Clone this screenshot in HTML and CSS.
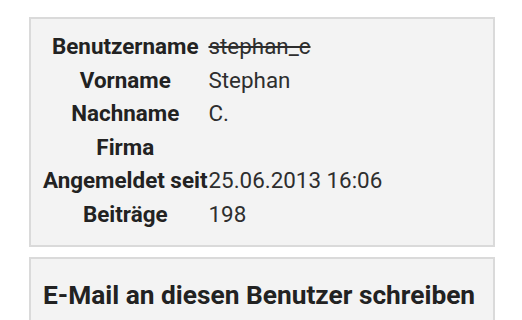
FILE: index.html
```html
<!DOCTYPE html>
<html lang="de">
<head>
<meta charset="utf-8">
<link rel="stylesheet" href="styles.css">
</head>
<body>
<div class="card">
  <table class="info">
    <tr><th>Benutzername</th><td><del>stephan_c</del></td></tr>
    <tr><th>Vorname</th><td>Stephan</td></tr>
    <tr><th>Nachname</th><td>C.</td></tr>
    <tr><th>Firma</th><td></td></tr>
    <tr><th>Angemeldet seit</th><td>25.06.2013 16:06</td></tr>
    <tr><th>Beiträge</th><td>198</td></tr>
  </table>
</div>
<div class="card card-mail">
  <h2 class="title">E-Mail an diesen Benutzer schreiben</h2>
</div>
</body>
</html>
```
FILE: styles.css
```css
html, body {
  margin: 0;
  padding: 0;
  background: #ffffff;
}
body {
  font-family: Roboto, "Liberation Sans", sans-serif;
  color: #222222;
}
.card {
  margin: 17px 27px 10px 29px;
  border: 2px solid #dadada;
  background: #f3f3f3;
  padding: 11px 12px 14px 12px;
}
.info {
  border-collapse: collapse;
  font-size: 22.4px;
  line-height: 33.5px;
}
.info th {
  padding: 0;
  font-weight: 700;
  text-align: center;
  color: #222222;
  white-space: nowrap;
}
.info td {
  padding: 0 0 0 1px;
  font-weight: 400;
  color: #2e2e2e;
}
.info del {
  text-decoration-thickness: 2px;
}
.card-mail {
  margin-top: 0;
  padding-top: 20px;
}
.title {
  margin: 0;
  font-size: 26.3px;
  font-weight: 700;
  line-height: 32px;
  color: #222222;
}
```
